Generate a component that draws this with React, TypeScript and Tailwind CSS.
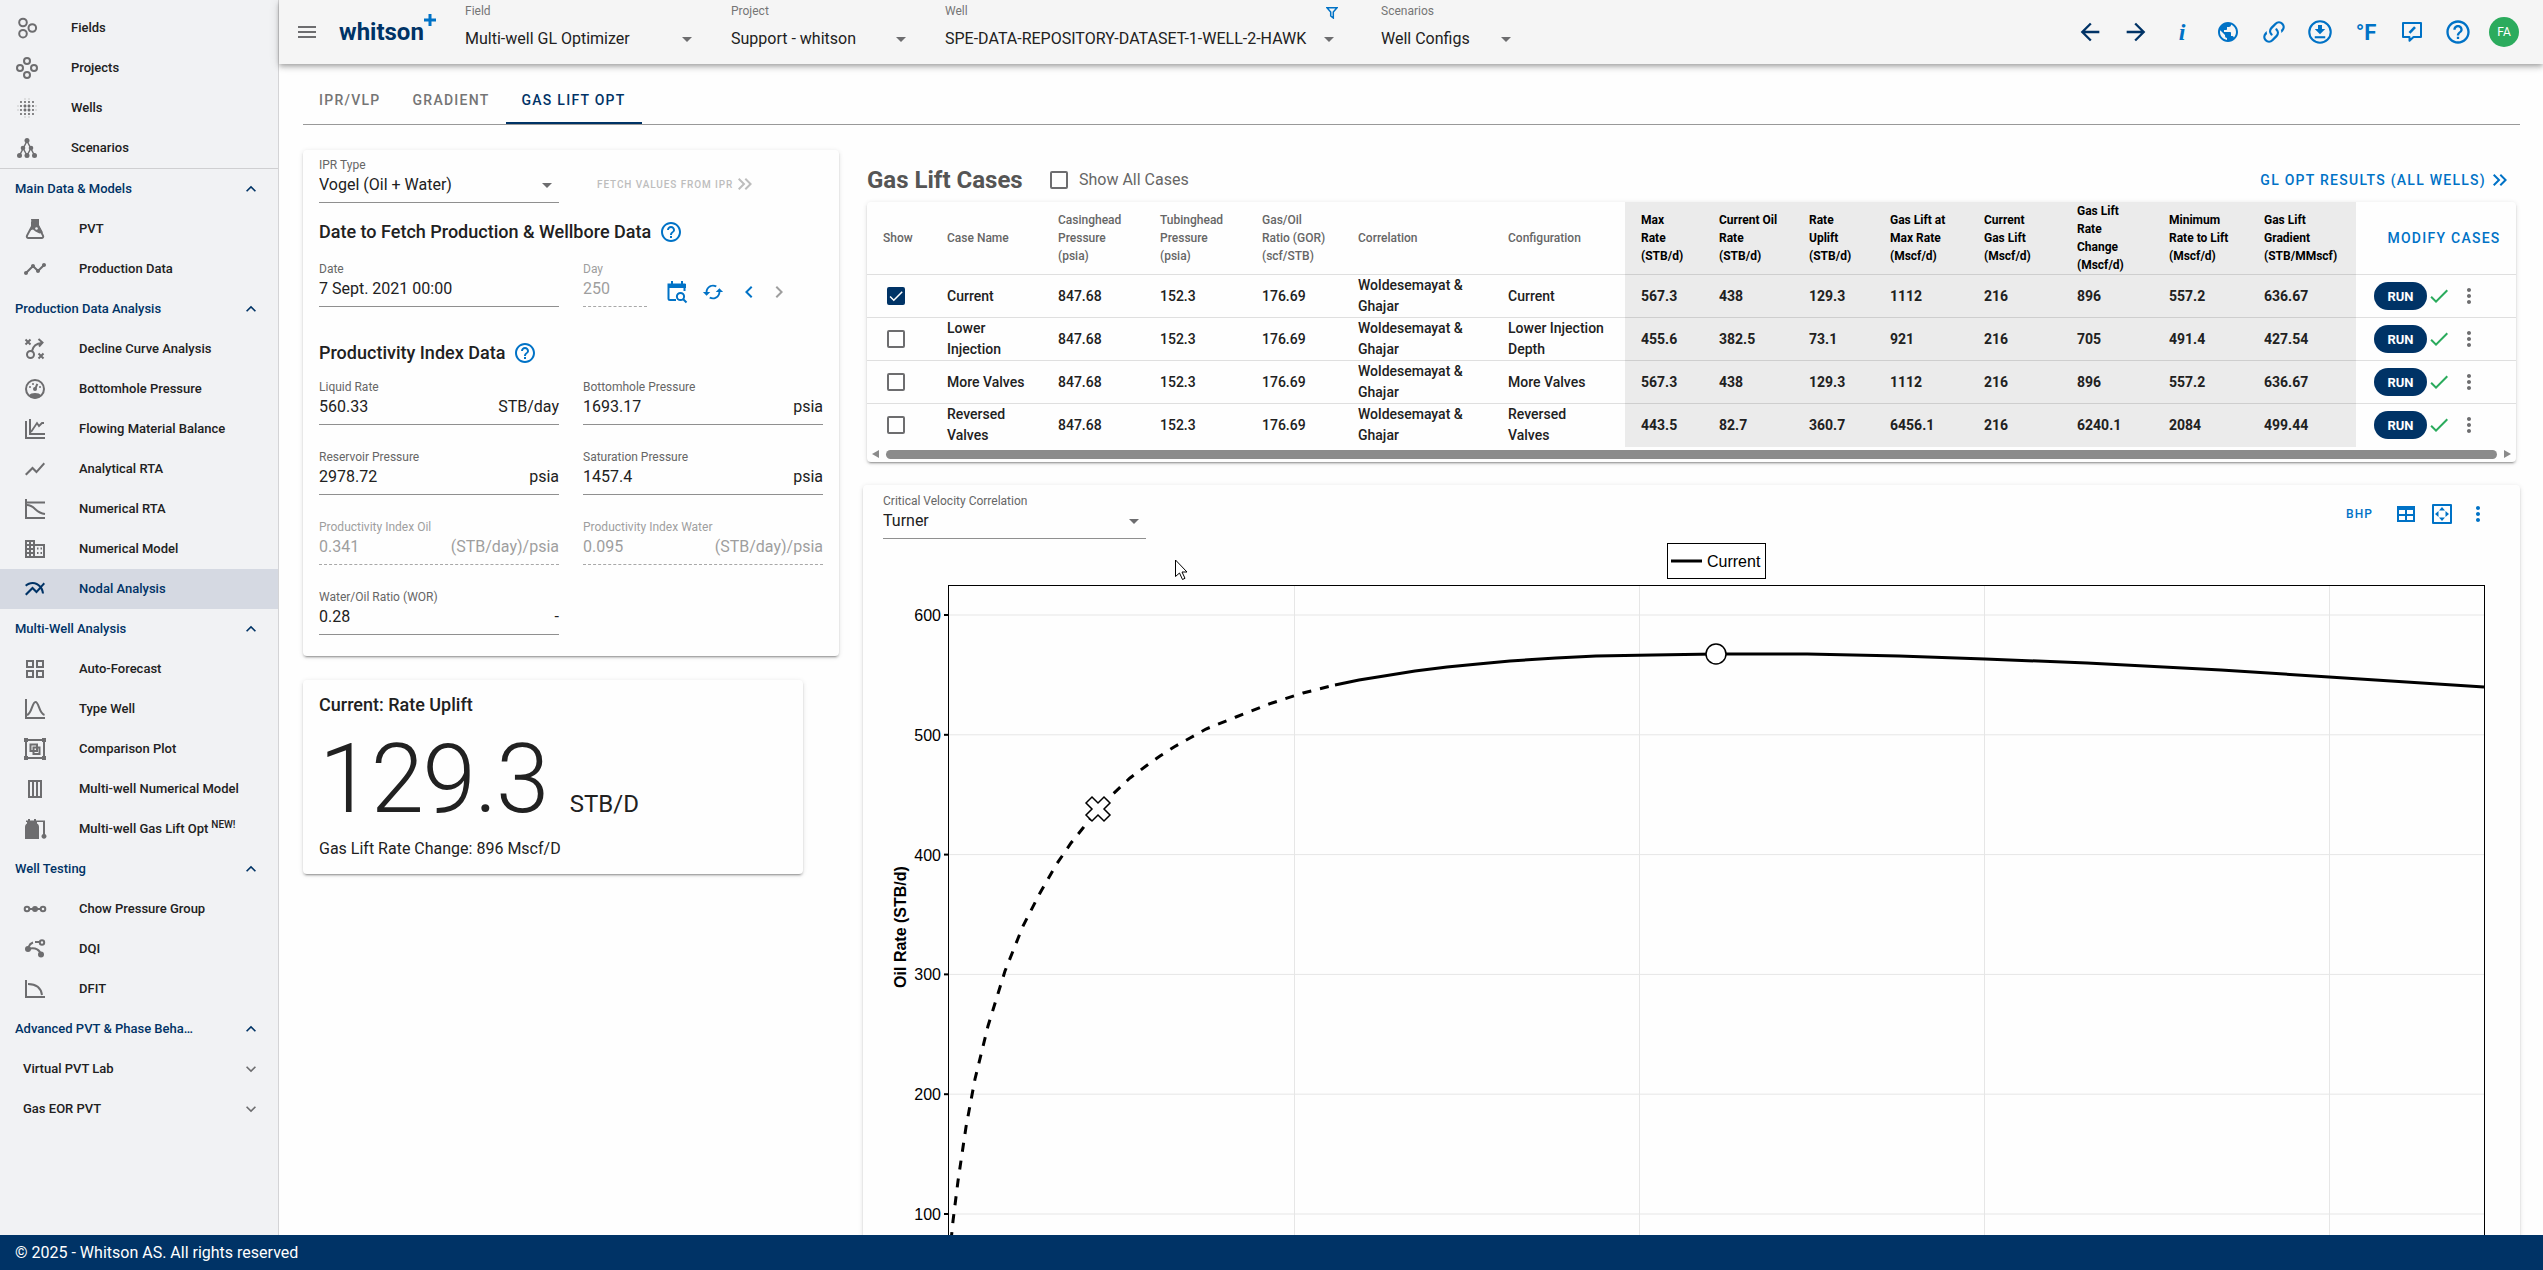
import { useState } from 'react'
import type { ReactNode } from 'react'
import {
  MdArrowBack, MdArrowDropDown, MdArrowForward, MdBlurOn, MdCached, MdCheck, MdChevronLeft,
  MdChevronRight, MdHelpOutline, MdKeyboardArrowDown, MdKeyboardArrowUp,
  MdKeyboardDoubleArrowRight, MdMenu, MdMoreVert, MdMultilineChart, MdPublic, MdShowChart, MdTimeline,
} from 'react-icons/md'

function Svg({ children, className = 'w-6 h-6' }: { children: ReactNode; className?: string }) {
  return (
    <svg viewBox="0 0 24 24" className={className} fill="none" stroke="currentColor" strokeWidth={2} aria-hidden="true">
      {children}
    </svg>
  )
}

const icons = {
  fields: (
    <Svg>
      <circle cx="8" cy="6.5" r="3.8" /><circle cx="17.3" cy="12" r="3.8" /><circle cx="8" cy="17.7" r="3.8" />
    </Svg>
  ),
  projects: (
    <Svg>
      <circle cx="12" cy="5" r="3" /><circle cx="5" cy="12" r="3" /><circle cx="19" cy="12" r="3" /><circle cx="12" cy="19" r="3" />
    </Svg>
  ),
  wells: <MdBlurOn className="w-6 h-6" />,
  scenarios: (
    <Svg>
      <path d="M12 5L4.5 19.5M12 5l7.5 14.5M8 12l4 7.5M16 12l-4 7.5" strokeWidth="1.5" />
      <g fill="currentColor" stroke="none">
        <circle cx="12" cy="4.5" r="2.5" /><circle cx="8" cy="12" r="2.3" /><circle cx="16" cy="12" r="2.3" />
        <circle cx="4.5" cy="19.5" r="2.5" /><circle cx="12" cy="19.5" r="2.5" /><circle cx="19.5" cy="19.5" r="2.5" />
      </g>
    </Svg>
  ),
  pvt: (
    <Svg>
      <path d="M9 4.5v4.8L4 18.6c-.6 1.2.1 2.4 1.4 2.4h13.2c1.3 0 2-1.2 1.4-2.4L15 9.3V4.5" />
      <path d="M8 2h8v6l4 7.5-3.5 1-4-2-2.5-2-3 1L9 8.5z" fill="currentColor" stroke="none" />
      <circle cx="13.5" cy="11.5" r="1.3" fill="#f1f2f4" stroke="none" />
    </Svg>
  ),
  timeline: <MdTimeline className="w-6 h-6" />,
  decline: (
    <Svg>
      <circle cx="7.5" cy="17.5" r="3.5" />
      <path d="M2.5 2.5l5 5M7.5 2.5l-5 5M15.5 16.5l5 5M20.5 16.5l-5 5M9 14c1-5 4-7.5 10-8M15.5 2l4 3.5-3.5 4" />
    </Svg>
  ),
  gauge: (
    <Svg>
      <circle cx="12" cy="12" r="9" />
      <path d="M5.5 18.5C7 16.8 9.3 16 12 16s5 .8 6.5 2.5C17 20.5 14.7 21.5 12 21.5s-5-1-6.5-3z" fill="currentColor" stroke="none" />
      <path d="M12 12.5l2.3-5.7" />
      <g fill="currentColor" stroke="none">
        <circle cx="12" cy="12" r="2" /><circle cx="10" cy="7" r="1" /><circle cx="7" cy="10" r="1" /><circle cx="17" cy="10" r="1" />
      </g>
    </Svg>
  ),
  balance: (
    <Svg>
      <path d="M3 4v17h19M7 2v15h15" />
      <path d="M8 15l6-9 2 3 3-3h2" strokeWidth="1.8" />
    </Svg>
  ),
  showChart: <MdShowChart className="w-6 h-6" />,
  numRta: (
    <Svg>
      <path d="M3 2v19h19M3 5.5h19M4 8c8 0 8 8 18 9" />
    </Svg>
  ),
  building: (
    <Svg>
      <path d="M3 4h8v16H3zM11 8h10v12H11M3 8h8M3 12h8M3 16h8M7 4v16" />
      <path d="M14 11.5h1.5M14 16h1.5M17.5 11.5h1.5M17.5 16h1.5" />
    </Svg>
  ),
  multiline: <MdMultilineChart className="w-6 h-6" />,
  grid: (
    <Svg>
      <path d="M4 4h6v6H4zM14 4h6v6h-6zM4 14h6v6H4zM14 14h6v6h-6z" />
    </Svg>
  ),
  bell: (
    <Svg>
      <path d="M3 2v19h19M4 18C9 16.5 9 5 12.5 5S16 16.5 21.5 18" />
    </Svg>
  ),
  compare: (
    <Svg>
      <path d="M3 3h18v18H3z" />
      <path d="M7.5 7.5h6.5v6.5H7.5zM10.5 10.5h6v6.5h-6z" />
      <path d="M1 1h4v4H1zM19 1h4v4h-4zM1 19h4v4H1zM19 19h4v4h-4z" fill="currentColor" stroke="none" />
    </Svg>
  ),
  columns: (
    <Svg>
      <path d="M6 4h12v16H6zM10 4v16M14 4v16" />
    </Svg>
  ),
  gasLift: (
    <Svg>
      <path d="M2 10c0-2 1-3 2-3.5V5H3V3.5h2V2h2v1.5h4V2h2v1.5h9V17a2.5 2.5 0 1 1-2 0V5h-6v1.5c1.2.5 2 1.5 2 3.5v12H2z" fill="currentColor" stroke="none" />
    </Svg>
  ),
  chow: (
    <Svg>
      <path d="M7 12h10" />
      <circle cx="4" cy="12" r="2.3" /><circle cx="20" cy="12" r="2.3" />
      <circle cx="12" cy="12" r="3" fill="currentColor" stroke="none" />
    </Svg>
  ),
  dqi: (
    <Svg>
      <path d="M5 12c8-2 12 1 13 6" />
      <path d="M5.5 10c1-2.5 3-4 4.5-4.5M12 5h4" />
      <circle cx="19" cy="5.5" r="2.2" />
      <g fill="currentColor" stroke="none"><circle cx="5" cy="12" r="3" /><circle cx="18" cy="17.5" r="3" /></g>
    </Svg>
  ),
  dfit: (
    <Svg>
      <path d="M3 3v17h19M5 7c8 0 13 4 14 11" />
    </Svg>
  ),
}

type IconName = keyof typeof icons

const TOP_ITEMS: { icon: IconName; label: string }[] = [
  { icon: 'fields', label: 'Fields' },
  { icon: 'projects', label: 'Projects' },
  { icon: 'wells', label: 'Wells' },
  { icon: 'scenarios', label: 'Scenarios' },
]

const SECTIONS: { title: string; items: { icon: IconName; label: string; isNew?: boolean }[] }[] = [
  {
    title: 'Main Data & Models',
    items: [
      { icon: 'pvt', label: 'PVT' },
      { icon: 'timeline', label: 'Production Data' },
    ],
  },
  {
    title: 'Production Data Analysis',
    items: [
      { icon: 'decline', label: 'Decline Curve Analysis' },
      { icon: 'gauge', label: 'Bottomhole Pressure' },
      { icon: 'balance', label: 'Flowing Material Balance' },
      { icon: 'showChart', label: 'Analytical RTA' },
      { icon: 'numRta', label: 'Numerical RTA' },
      { icon: 'building', label: 'Numerical Model' },
      { icon: 'multiline', label: 'Nodal Analysis' },
    ],
  },
  {
    title: 'Multi-Well Analysis',
    items: [
      { icon: 'grid', label: 'Auto-Forecast' },
      { icon: 'bell', label: 'Type Well' },
      { icon: 'compare', label: 'Comparison Plot' },
      { icon: 'columns', label: 'Multi-well Numerical Model' },
      { icon: 'gasLift', label: 'Multi-well Gas Lift Opt', isNew: true },
    ],
  },
  {
    title: 'Well Testing',
    items: [
      { icon: 'chow', label: 'Chow Pressure Group' },
      { icon: 'dqi', label: 'DQI' },
      { icon: 'dfit', label: 'DFIT' },
    ],
  },
]

const ACTIVE = 'Nodal Analysis'
const TABS = ['IPR/VLP', 'Gradient', 'Gas Lift Opt']

const INPUT_COLS = ['Case Name', 'Casinghead Pressure (psia)', 'Tubinghead Pressure (psia)', 'Gas/Oil Ratio (GOR) (scf/STB)', 'Correlation', 'Configuration']
const RESULT_COLS = [
  'Max Rate (STB/d)', 'Current Oil Rate (STB/d)', 'Rate Uplift (STB/d)', 'Gas Lift at Max Rate (Mscf/d)',
  'Current Gas\u00a0Lift (Mscf/d)', 'Gas\u00a0Lift Rate Change (Mscf/d)', 'Minimum Rate to Lift (Mscf/d)', 'Gas Lift Gradient (STB/MMscf)',
]
const COL_WIDTHS = [64, 111, 102, 102, 96, 150, 133, 78, 90, 81, 94, 93, 92, 95, 108, 160]

const CASES = [
  { inputs: ['Current', '847.68', '152.3', '176.69', 'Woldesemayat & Ghajar', 'Current'], results: ['567.3', '438', '129.3', '1112', '216', '896', '557.2', '636.67'] },
  { inputs: ['Lower Injection', '847.68', '152.3', '176.69', 'Woldesemayat & Ghajar', 'Lower Injection Depth'], results: ['455.6', '382.5', '73.1', '921', '216', '705', '491.4', '427.54'] },
  { inputs: ['More Valves', '847.68', '152.3', '176.69', 'Woldesemayat & Ghajar', 'More Valves'], results: ['567.3', '438', '129.3', '1112', '216', '896', '557.2', '636.67'] },
  { inputs: ['Reversed Valves', '847.68', '152.3', '176.69', 'Woldesemayat & Ghajar', 'Reversed Valves'], results: ['443.5', '82.7', '360.7', '6456.1', '216', '6240.1', '2084', '499.44'] },
]

const CARD = 'rounded bg-[#fefefe] shadow-[0_3px_1px_-2px_rgba(0,0,0,0.2),0_2px_2px_rgba(0,0,0,0.14),0_1px_5px_rgba(0,0,0,0.12)]'

export default function App() {
  return (
    <div className="h-screen flex flex-col overflow-hidden bg-[#fefefe] font-[Roboto,sans-serif] text-[#212121]">
      <div className="flex-1 min-h-0 flex">
        <Sidebar />
        <div className="flex-1 min-w-0 flex flex-col">
          <TopBar />
          <main className="flex-1 min-h-0 overflow-hidden pl-6 pr-[23px] pt-[13px]">
            <Tabs />
            <div className="flex items-start gap-6 mt-[25px]">
              <div className="w-[536px] shrink-0">
                <InputsCard />
                <UpliftCard />
              </div>
              <div className="flex-1 min-w-0">
                <CasesPanel />
                <ChartCard />
              </div>
            </div>
          </main>
        </div>
      </div>
      <footer className="h-[35px] shrink-0 bg-[#003366] text-white text-base px-[15px] flex items-center">
        © 2025 - Whitson AS. All rights reserved
      </footer>
    </div>
  )
}

function Sidebar() {
  return (
    <aside className="w-[279px] shrink-0 bg-[#f1f2f4] border-r border-[#d4d4d6] overflow-hidden text-[13px] font-medium">
      <nav>
        <div className="pt-2 border-b border-[#cfcfd1]">
          {TOP_ITEMS.map(item => (
            <a key={item.label} href="#" className="flex items-center h-10 pl-[15px]">
              <span className="text-[#6d6d6f] w-14">{icons[item.icon]}</span>
              {item.label}
            </a>
          ))}
        </div>
        {SECTIONS.map(section => (
          <div key={section.title}>
            <SectionHeader title={section.title} />
            {section.items.map(item => (
              <a
                key={item.label}
                href="#"
                className={`flex items-center h-10 pl-[23px] ${item.label === ACTIVE ? 'bg-[#d5d9e2] text-[#003366]' : ''}`}
              >
                <span className={`w-14 ${item.label === ACTIVE ? '' : 'text-[#6d6d6f]'}`}>{icons[item.icon]}</span>
                <span>
                  {item.label}
                  {item.isNew && <sup className="text-[10px] ml-[3px]">NEW!</sup>}
                </span>
              </a>
            ))}
          </div>
        ))}
        <SectionHeader title="Advanced PVT & Phase Beha…" />
        {['Virtual PVT Lab', 'Gas EOR PVT'].map(label => (
          <button key={label} type="button" className="flex items-center justify-between w-full h-10 pl-[23px] pr-[17px]">
            {label}
            <MdKeyboardArrowDown className="w-5 h-5 text-[#6d6d6f]" />
          </button>
        ))}
      </nav>
    </aside>
  )
}

function SectionHeader({ title }: { title: string }) {
  return (
    <button type="button" className="flex items-center justify-between w-full h-10 pl-[15px] pr-[17px] text-[#003366]">
      {title}
      <MdKeyboardArrowUp className="w-5 h-5" />
    </button>
  )
}

function TopBar() {
  return (
    <header className="relative z-10 h-16 shrink-0 flex items-center bg-[#f5f5f5] px-4 shadow-[0_2px_4px_-1px_rgba(0,0,0,0.2),0_4px_5px_rgba(0,0,0,0.14),0_1px_10px_rgba(0,0,0,0.12)]">
      <button type="button" aria-label="Menu" className="text-[#6d6d6f]"><MdMenu className="w-6 h-6" /></button>
      <a href="#" className="relative w-[126px] ml-5 text-2xl leading-8 font-bold text-[#003366]">
        whitson
        <svg viewBox="0 0 12 12" className="absolute left-[85px] -top-[2px] w-3 h-3" aria-hidden="true">
          <path d="M6 0v12M0 6h12" stroke="#0072c6" strokeWidth="3" />
        </svg>
      </a>
      <div className="flex self-start gap-8 pt-[3px]">
        <TopSelect id="field" label="Field" value="Multi-well GL Optimizer" width="w-[234px]" />
        <TopSelect id="project" label="Project" value="Support - whitson" width="w-[182px]" />
        <TopSelect id="well" label="Well" value="SPE-DATA-REPOSITORY-DATASET-1-WELL-2-HAWK" width="w-[404px]" filter />
        <TopSelect id="scenarios" label="Scenarios" value="Well Configs" width="w-[137px]" />
      </div>
      <div className="ml-auto flex items-center text-[#0072c6]">
        <BarButton label="Back"><MdArrowBack className="w-7 h-7 text-[#003366]" /></BarButton>
        <BarButton label="Forward"><MdArrowForward className="w-7 h-7 text-[#003366]" /></BarButton>
        <BarButton label="Info"><span className="font-['Liberation_Serif',serif] italic font-bold text-2xl">i</span></BarButton>
        <BarButton label="Website"><MdPublic className="w-6 h-6" /></BarButton>
        <BarButton label="Copy link">
          <svg viewBox="0 0 24 24" className="w-7 h-7" fill="currentColor">
            <path d="M10.59 13.41c.41.39.41 1.03 0 1.42-.39.39-1.03.39-1.42 0a5.003 5.003 0 0 1 0-7.07l3.54-3.54a5.003 5.003 0 0 1 7.07 0 5.003 5.003 0 0 1 0 7.07l-1.49 1.49c.01-.82-.12-1.64-.4-2.42l.47-.48a2.982 2.982 0 0 0 0-4.24 2.982 2.982 0 0 0-4.24 0l-3.53 3.53a2.982 2.982 0 0 0 0 4.24m2.82-4.24c.39-.39 1.03-.39 1.42 0a5.003 5.003 0 0 1 0 7.07l-3.54 3.54a5.003 5.003 0 0 1-7.07 0 5.003 5.003 0 0 1 0-7.07l1.49-1.49c-.01.82.12 1.64.4 2.43l-.47.47a2.982 2.982 0 0 0 0 4.24 2.982 2.982 0 0 0 4.24 0l3.53-3.53a2.982 2.982 0 0 0 0-4.24c-.41-.39-.41-1.03 0-1.42z" />
          </svg>
        </BarButton>
        <BarButton label="Download">
          <svg viewBox="0 0 24 24" className="w-7 h-7" fill="none" stroke="currentColor">
            <circle cx="12" cy="12" r="9.2" strokeWidth="1.8" />
            <path d="M7.5 16.5h9" strokeWidth="1.8" />
            <path d="M10.3 6h3.4v3.5h2.8L12 14 7.5 9.5h2.8z" fill="currentColor" stroke="none" />
          </svg>
        </BarButton>
        <BarButton label="Units"><span className="font-bold text-[22px]">°F</span></BarButton>
        <BarButton label="Feedback">
          <Svg>
            <path d="M3 3h18v14h-7.5L9.5 20.8V17H3z" strokeLinejoin="round" />
            <path d="M9.5 12.8l5.5-5.6" strokeWidth="2.6" />
          </Svg>
        </BarButton>
        <BarButton label="Help"><MdHelpOutline className="w-7 h-7" /></BarButton>
        <BarButton label="Account">
          <span className="w-[30px] h-[30px] rounded-full bg-[#2bab5d] text-white text-xs flex items-center justify-center">FA</span>
        </BarButton>
      </div>
    </header>
  )
}

function BarButton({ label, children }: { label: string; children: ReactNode }) {
  return (
    <button type="button" aria-label={label} className="w-[46px] h-12 flex items-center justify-center">
      {children}
    </button>
  )
}

function TopSelect({ id, label, value, width, filter }: { id: string; label: string; value: string; width: string; filter?: boolean }) {
  return (
    <div className={`${width} ${filter ? 'pr-2' : ''}`}>
      <div className="flex items-start justify-between h-4">
        <label htmlFor={id} className="text-xs leading-4 text-[#757575]">{label}</label>
        {filter && (
          <svg viewBox="0 0 12 12" className="w-3 h-3 mr-[3px] mt-1" fill="none" stroke="#0072c6" strokeWidth="1.5" aria-label="Filtered">
            <path d="M1 .8h10L7.3 5v6L4.7 9V5z" />
          </svg>
        )}
      </div>
      <SelectBox id={id} value={value} className="mt-2" />
    </div>
  )
}

function SelectBox({ id, value, className = '' }: { id: string; value: string; className?: string }) {
  return (
    <div className={`relative ${className}`}>
      <select id={id} className="appearance-none block w-full h-6 pr-6 bg-transparent text-base outline-none">
        <option>{value}</option>
      </select>
      <MdArrowDropDown className="absolute right-0 top-0 w-6 h-6 text-[#6d6d6f] pointer-events-none" />
    </div>
  )
}

function Tabs() {
  const [active, setActive] = useState(TABS[2])
  return (
    <div className="h-12 flex border-b border-[#999]">
      {TABS.map(tab => (
        <button
          key={tab}
          type="button"
          onClick={() => setActive(tab)}
          className={`px-4 text-sm font-medium uppercase tracking-[0.09em] border-b-2 ${tab === active ? 'text-[#003366] border-[#003366]' : 'text-[#757575] border-transparent'}`}
        >
          {tab}
        </button>
      ))}
    </div>
  )
}

function Field({ id, label, value, unit, disabled, className = '' }: {
  id: string
  label: string
  value: string
  unit?: string
  disabled?: boolean
  className?: string
}) {
  return (
    <div className={`border-b pb-[5px] ${disabled ? 'border-dashed border-[#a8a8a8] text-[#9e9e9e]' : 'border-[#8f8f8f]'} ${className}`}>
      <label htmlFor={id} className={`block text-xs leading-4 ${disabled ? '' : 'text-[#666]'}`}>{label}</label>
      <div className="flex h-6 text-base">
        <input id={id} defaultValue={value} disabled={disabled} className="flex-1 min-w-0 bg-transparent outline-none" />
        {unit && <span>{unit}</span>}
      </div>
    </div>
  )
}

function SectionTitle({ children }: { children: ReactNode }) {
  return (
    <h3 className="flex items-center gap-2 h-7 text-lg font-medium">
      {children}
      <button type="button" aria-label="Help" className="text-[#0072c6]"><MdHelpOutline className="w-6 h-6" /></button>
    </h3>
  )
}

function InputsCard() {
  return (
    <section className={`${CARD} px-4 pt-[7px] pb-[21px]`}>
      <div className="grid grid-cols-2 gap-x-6">
        <div className="border-b border-[#8f8f8f] pb-[5px]">
          <label htmlFor="ipr-type" className="block text-xs leading-4 text-[#666]">IPR Type</label>
          <SelectBox id="ipr-type" value="Vogel (Oil + Water)" />
        </div>
        <button type="button" disabled className="justify-self-start flex items-center h-9 mt-[9px] ml-[14px] text-[10px] font-medium uppercase tracking-[0.09em] text-[#bdbdbd]">
          Fetch values from IPR
          <MdKeyboardDoubleArrowRight className="w-6 h-6" />
        </button>
      </div>

      <div className="mt-[15px]"><SectionTitle>Date to Fetch Production &amp; Wellbore Data</SectionTitle></div>
      <div className="mt-[15px] grid grid-cols-2 gap-x-6">
        <Field id="date" label="Date" value="7 Sept. 2021 00:00" />
        <div className="flex">
          <Field id="day" label="Day" value="250" disabled className="w-16" />
          <div className="flex items-center ml-3 mt-4 h-[30px] text-[#0072c6]">
            <button type="button" aria-label="Pick date" className="w-9 flex justify-center">
              <Svg>
                <path d="M11 20H5a1.5 1.5 0 0 1-1.5-1.5V4.5h16V11" />
                <path d="M3 4h18v4H3zM6 1h2v3H6zM16 1h2v3h-2z" fill="currentColor" stroke="none" />
                <circle cx="15.5" cy="16.5" r="3.6" />
                <path d="M18 19l3.5 3.5" />
              </Svg>
            </button>
            <button type="button" aria-label="Refresh" className="w-9 flex justify-center"><MdCached className="w-[22px] h-[22px]" /></button>
            <button type="button" aria-label="Previous day" className="w-9 flex justify-center"><MdChevronLeft className="w-6 h-6" /></button>
            <button type="button" aria-label="Next day" className="w-6 flex justify-center text-[#9e9e9e]"><MdChevronRight className="w-6 h-6" /></button>
          </div>
        </div>
      </div>

      <div className="mt-8"><SectionTitle>Productivity Index Data</SectionTitle></div>
      <div className="mt-3 grid grid-cols-2 gap-6">
        <Field id="liquid-rate" label="Liquid Rate" value="560.33" unit="STB/day" />
        <Field id="bhp" label="Bottomhole Pressure" value="1693.17" unit="psia" />
        <Field id="res-pressure" label="Reservoir Pressure" value="2978.72" unit="psia" />
        <Field id="sat-pressure" label="Saturation Pressure" value="1457.4" unit="psia" />
        <Field id="pi-oil" label="Productivity Index Oil" value="0.341" unit="(STB/day)/psia" disabled />
        <Field id="pi-water" label="Productivity Index Water" value="0.095" unit="(STB/day)/psia" disabled />
        <Field id="wor" label="Water/Oil Ratio (WOR)" value="0.28" unit="-" />
      </div>
    </section>
  )
}

function UpliftCard() {
  return (
    <section className={`${CARD} mt-6 w-[500px] px-4 pt-[11px] pb-[13px]`}>
      <h3 className="text-lg leading-7 font-medium">Current: Rate Uplift</h3>
      <div className="mt-3 flex items-baseline gap-[22px] h-24">
        <span className="text-8xl leading-none font-light tracking-[-0.015em]">129.3</span>
        <span className="text-2xl leading-none">STB/D</span>
      </div>
      <p className="mt-[10px] text-base leading-6">Gas Lift Rate Change: 896 Mscf/D</p>
    </section>
  )
}

function Checkbox({ id, label, checked, onChange }: { id: string; label?: string; checked: boolean; onChange: () => void }) {
  return (
    <span className="relative block w-[18px] h-[18px]">
      <input
        id={id}
        type="checkbox"
        aria-label={label}
        checked={checked}
        onChange={onChange}
        className="appearance-none block w-[18px] h-[18px] border-2 border-[#6d6d6f] rounded-xs checked:bg-[#003366] checked:border-[#003366]"
      />
      {checked && <MdCheck className="absolute inset-0 w-[18px] h-[18px] text-white pointer-events-none" />}
    </span>
  )
}

function CasesPanel() {
  const [shown, setShown] = useState([true, false, false, false])
  const [showAll, setShowAll] = useState(false)
  const toggle = (i: number) => setShown(shown.map((s, j) => (j === i ? !s : s)))

  return (
    <section className="mx-1">
      <div className="flex items-center h-[52px] pt-2">
        <h2 className="w-[183px] text-2xl font-bold text-[#555]">Gas Lift Cases</h2>
        <Checkbox id="show-all" checked={showAll} onChange={() => setShowAll(!showAll)} />
        <label htmlFor="show-all" className="ml-[11px] text-base text-[#666]">Show All Cases</label>
        <a href="#" className="ml-auto mr-1 flex items-center gap-[2px] text-sm font-medium uppercase tracking-[0.09em] text-[#0072c6]">
          GL Opt Results (All Wells)
          <MdKeyboardDoubleArrowRight className="w-6 h-6" />
        </a>
      </div>

      <div className={`${CARD} overflow-hidden`}>
        <table className="w-full table-fixed text-left text-sm">
          <colgroup>
            {COL_WIDTHS.map((w, i) => <col key={i} style={{ width: w }} />)}
          </colgroup>
          <thead>
            <tr className="h-[72px] text-xs leading-[18px] border-b border-black/12">
              <th className="p-0 pl-4 font-medium text-[#666]">Show</th>
              {INPUT_COLS.map(c => <th key={c} className="p-0 pl-4 pr-3 font-medium text-[#666]">{c}</th>)}
              {RESULT_COLS.map(c => <th key={c} className="p-0 pl-4 pr-3 font-bold text-black bg-[#ebebeb]">{c}</th>)}
              <th className="p-0 text-center">
                <button type="button" className="ml-4 text-sm font-medium uppercase tracking-[0.09em] text-[#0072c6]">Modify Cases</button>
              </th>
            </tr>
          </thead>
          <tbody>
            {CASES.map((row, i) => (
              <tr key={i} className="h-[43px] leading-[21px] border-b border-black/12 last:border-0">
                <td className="p-0 pl-5">
                  <Checkbox id={`case-${i}`} label={`Show ${row.inputs[0]}`} checked={shown[i]} onChange={() => toggle(i)} />
                </td>
                {row.inputs.map((v, j) => <td key={j} className="p-0 pl-4 pr-4 font-medium">{v}</td>)}
                {row.results.map((v, j) => <td key={j} className="p-0 pl-4 font-bold bg-[#ebebeb]">{v}</td>)}
                <td className="p-0 pl-[18px]">
                  <div className="flex items-center">
                    <button type="button" className="w-[53px] h-7 rounded-full bg-[#003366] text-white text-[13px] font-bold">RUN</button>
                    <MdCheck className="w-6 h-6 text-[#2bab5d]" />
                    <button type="button" aria-label="Case menu" className="ml-[6px] text-[#6d6d6f]"><MdMoreVert className="w-6 h-6" /></button>
                  </div>
                </td>
              </tr>
            ))}
          </tbody>
        </table>
        {/* Horizontal scroll bar */}
        <div className="flex items-center gap-[7px] h-[15px] px-[5px]">
          <svg viewBox="0 0 7 8" className="w-[7px] h-2" fill="#8b8b8b"><path d="M7 0v8L0 4z" /></svg>
          <div className="flex-1 h-[9px] rounded-full bg-[#8b8b8b]" />
          <svg viewBox="0 0 7 8" className="w-[7px] h-2" fill="#8b8b8b"><path d="M0 0v8l7-4z" /></svg>
        </div>
      </div>
    </section>
  )
}

const Y_TICKS = [600, 500, 400, 300, 200, 100]
const X_GRID = [431, 776, 1121, 1466]
const DASHED: [number, number][] = [
  [88, 700], [90, 680], [95, 640], [103, 586], [112, 538], [125, 485], [142, 430], [160, 385], [177, 352], [193, 324],
  [208, 302], [220, 287], [235, 268], [250, 253], [267, 237], [283, 225], [297, 215], [311, 206], [327, 197],
  [343, 188], [373, 176], [406, 163], [440, 152], [472, 144],
]
const SOLID: [number, number][] = [
  [472, 144], [496, 139], [521, 135], [552, 130], [584, 126], [615, 123], [647, 120], [693, 117], [733, 115], [790, 114], [853, 113],
  [944, 113], [1036, 115], [1122, 118], [1224, 122], [1358, 129], [1466, 136], [1621, 146],
]
const toPath = (pts: [number, number][]) => 'M' + pts.map(p => p.join(' ')).join('L')
const yOf = (v: number) => 74 + (600 - v) * 1.198

function ChartCard() {
  return (
    <section className={`${CARD} mt-[23px]`}>
      <div className="flex justify-between pl-5 pr-6 pt-2">
        <div className="w-[263px] border-b border-[#8f8f8f] pb-[5px]">
          <label htmlFor="critical" className="block text-xs leading-4 text-[#666]">Critical Velocity Correlation</label>
          <SelectBox id="critical" value="Turner" />
        </div>
        <div className="flex items-center h-[42px] text-[#0072c6]">
          <button type="button" className="mr-[15px] text-xs font-medium tracking-[0.09em]">BHP</button>
          <button type="button" aria-label="Table" className="w-9 flex justify-center">
            <Svg>
              <path d="M4 5h16v14H4zM4 13h16M12 7v12" />
              <path d="M3 4h18v4H3z" fill="currentColor" stroke="none" />
            </Svg>
          </button>
          <button type="button" aria-label="Fit" className="w-9 flex justify-center">
            <Svg>
              <path d="M3 3h18v18H3z" strokeLinejoin="round" />
              <path d="M12 5l3 3.500H9zM12 19l3-3.500H9zM5 12l3.500-3v6zM19 12l-3.500-3v6z" fill="currentColor" stroke="none" />
            </Svg>
          </button>
          <button type="button" aria-label="Chart menu" className="w-9 flex justify-center"><MdMoreVert className="w-6 h-6" /></button>
        </div>
      </div>
      <svg viewBox="0 0 1657 860" className="block w-full mt-[2px] font-['Liberation_Sans',sans-serif]" fontSize="16" role="img" aria-label="Oil rate for each gas lift case">
        {/* Grid and y axis */}
        <g stroke="#e6e6e6" strokeWidth="1">
          {X_GRID.map(x => <path key={x} d={`M${x}.5 45V800`} />)}
          {Y_TICKS.map(v => <path key={v} d={`M86 ${yOf(v)}H1621`} />)}
        </g>
        {Y_TICKS.map(v => (
          <g key={v}>
            <path d={`M81 ${yOf(v)}h5`} stroke="#000" strokeWidth="2" />
            <text x="78" y={yOf(v) + 6} textAnchor="end">{v}</text>
          </g>
        ))}
        <rect x="85.5" y="44.5" width="1536" height="755" fill="none" stroke="#000" />
        <text transform="translate(43 386) rotate(-90)" textAnchor="middle" fontWeight="bold">Oil Rate (STB/d)</text>

        {/* Curve and markers */}
        <path d={toPath(DASHED)} fill="none" stroke="#000" strokeWidth="3" strokeDasharray="9 9" />
        <path d={toPath(SOLID)} fill="none" stroke="#000" strokeWidth="3" />
        <circle cx="853" cy="113" r="10" fill="#fff" stroke="#000" strokeWidth="1.5" />
        <path d="M235 262l6-6 6 6-6 6 6 6-6 6-6-6-6 6-6-6 6-6-6-6 6-6z" fill="#fff" stroke="#000" strokeWidth="1.5" />

        {/* Legend */}
        <rect x="804.5" y="2.5" width="98" height="35" fill="#fff" stroke="#000" />
        <path d="M808 20h31" stroke="#000" strokeWidth="3" />
        <text x="844" y="26">Current</text>

        {/* Pointer */}
        <path d="M312.5 19v16.5l4-3.5 3 6.5 2.5-1.2-3-6.300h5z" fill="#fff" stroke="#000" />
      </svg>
    </section>
  )
}
